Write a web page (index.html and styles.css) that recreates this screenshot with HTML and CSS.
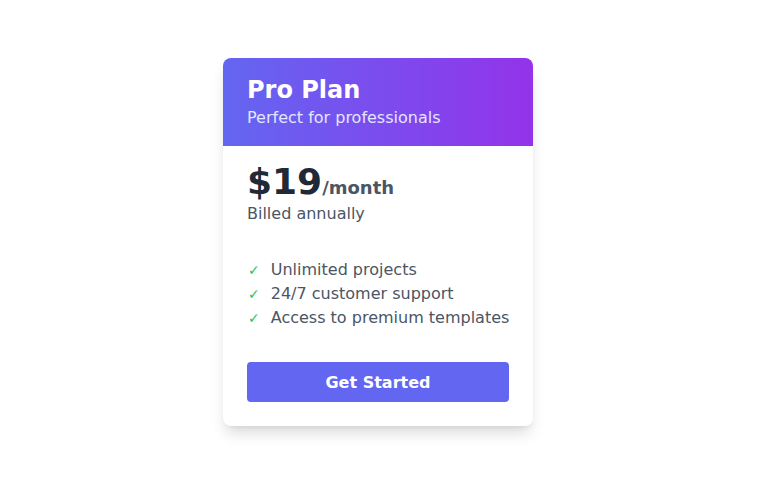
FILE: index.html
```html
<!DOCTYPE html>
<html lang="en">
<head>
<meta charset="utf-8">
<title>Pro Plan</title>
<link rel="stylesheet" href="styles.css">
</head>
<body>
<main class="page">
  <div class="card">
    <div class="card-header">
      <h2 class="plan-name">Pro Plan</h2>
      <p class="plan-desc">Perfect for professionals</p>
    </div>
    <div class="card-body">
      <div class="price-row">
        <span class="price">$19</span><span class="period">/month</span>
      </div>
      <p class="billing">Billed annually</p>
      <ul class="features">
        <li class="feature"><span class="check">✓</span>Unlimited projects</li>
        <li class="feature"><span class="check">✓</span>24/7 customer support</li>
        <li class="feature"><span class="check">✓</span>Access to premium templates</li>
      </ul>
      <button class="cta">Get Started</button>
    </div>
  </div>
</main>
</body>
</html>
```

FILE: styles.css
```css
* { box-sizing: border-box; }
html, body { margin: 0; padding: 0; background: #ffffff; }
body { font-family: "DejaVu Sans", "Liberation Sans", sans-serif; }
.page { min-height: 100vh; padding: 58px 0 40px 223px; }
.card {
  width: 310px;
  background: #ffffff;
  border-radius: 8px;
  overflow: hidden;
  box-shadow: 0 10px 15px -3px rgba(0,0,0,0.14), 0 4px 6px -4px rgba(0,0,0,0.1);
}
.card-header {
  background: linear-gradient(to right, #6366f1, #9333ea);
  padding: 16px 24px;
  color: #ffffff;
}
.plan-name { margin: 0; font-size: 24px; line-height: 32px; font-weight: 700; }
.plan-desc { margin: 0; font-size: 16px; line-height: 24px; color: #e0e7ff; }
.card-body { padding: 16px 24px 24px; }
.price-row { display: flex; align-items: baseline; }
.price { font-size: 36px; line-height: 40px; font-weight: 700; color: #1f2937; }
.period { font-size: 18px; line-height: 28px; font-weight: 700; color: #4b5563; }
.billing { margin: 0; font-size: 16px; line-height: 24px; color: #4b5563; }
.features { list-style: none; margin: 32px 0 32px; padding: 0; }
.feature { display: flex; align-items: center; white-space: nowrap; font-size: 16px; line-height: 24px; color: #4b5563; }
.check { color: #22c55e; font-size: 14px; margin-left: 1px; margin-right: 11px; }
.cta {
  display: block;
  width: 100%;
  height: 40px;
  border: 0;
  border-radius: 4px;
  background: #6366f1;
  color: #ffffff;
  font-family: inherit;
  font-size: 16px;
  font-weight: 700;
}
```
